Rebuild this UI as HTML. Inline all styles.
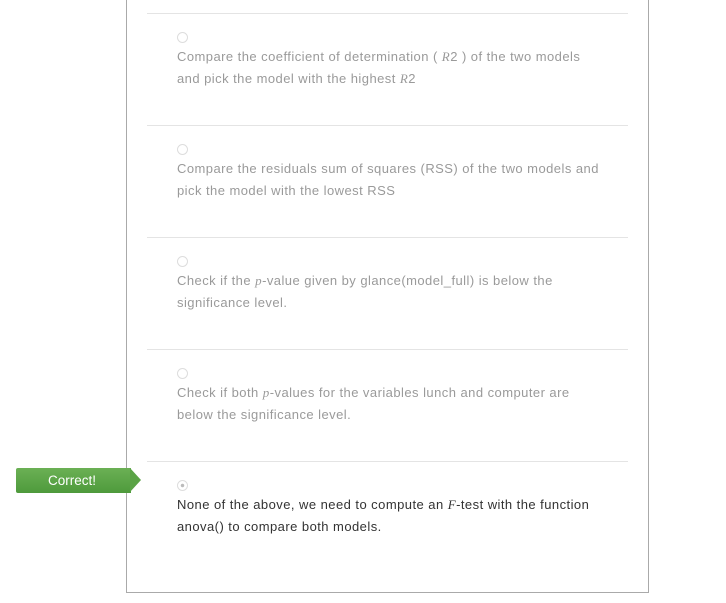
<!DOCTYPE html>
<html><head><style>
body{margin:0;width:726px;height:603px;background:#fff;font-family:"Liberation Sans",sans-serif;position:relative;overflow:hidden}
.box{position:absolute;left:126px;top:-2px;width:521px;height:594px;border:1px solid #aaa;border-top:none}
.sep{position:absolute;left:147px;width:481px;height:1px;background:#e4e4e4}
.r{position:absolute;left:177px;width:11px;height:11px;border:1px solid #ddd;border-radius:50%;box-sizing:border-box}
.t{position:absolute;left:177px;font-size:13px;line-height:22px;color:#9a9a9a;width:450px;letter-spacing:0.45px}
i{font-family:"Liberation Serif",serif}
.badge{position:absolute;left:16px;top:468px;width:115px;height:25px;background:linear-gradient(#6bb055,#4e9a3c);color:#fff;font-size:13.5px;line-height:25px;text-align:center;border-radius:2px 0 0 2px;padding-right:3px;box-sizing:border-box}
.arrow{position:absolute;left:130px;top:468px;width:0;height:0;border-top:12.5px solid transparent;border-bottom:12.5px solid transparent;border-left:11px solid #5aa346}
</style></head><body>
<div class="box"></div>
<div class="sep" style="top:13px"></div>
<div class="sep" style="top:125px"></div>
<div class="sep" style="top:237px"></div>
<div class="sep" style="top:349px"></div>
<div class="sep" style="top:461px"></div>
<div class="r" style="top:32px"></div>
<div class="t" style="top:46px">Compare the coefficient of determination ( <i>R</i>2 ) of the two models<br>and pick the model with the highest <i>R</i>2</div>
<div class="r" style="top:144px"></div>
<div class="t" style="top:158px">Compare the residuals sum of squares (RSS) of the two models and<br>pick the model with the lowest RSS</div>
<div class="r" style="top:256px"></div>
<div class="t" style="top:270px">Check if the <i>p</i>-value given by glance(model_full) is below the<br>significance level.</div>
<div class="r" style="top:368px"></div>
<div class="t" style="top:382px">Check if both <i>p</i>-values for the variables lunch and computer are<br>below the significance level.</div>
<div class="r" style="top:480px;background:radial-gradient(circle,#bbb 0 1.5px,transparent 2px)"></div>
<div class="t" style="top:494px;color:#333">None of the above, we need to compute an <i>F</i>-test with the function<br>anova() to compare both models.</div>
<div class="badge">Correct!</div><div class="arrow"></div>
</body></html>
